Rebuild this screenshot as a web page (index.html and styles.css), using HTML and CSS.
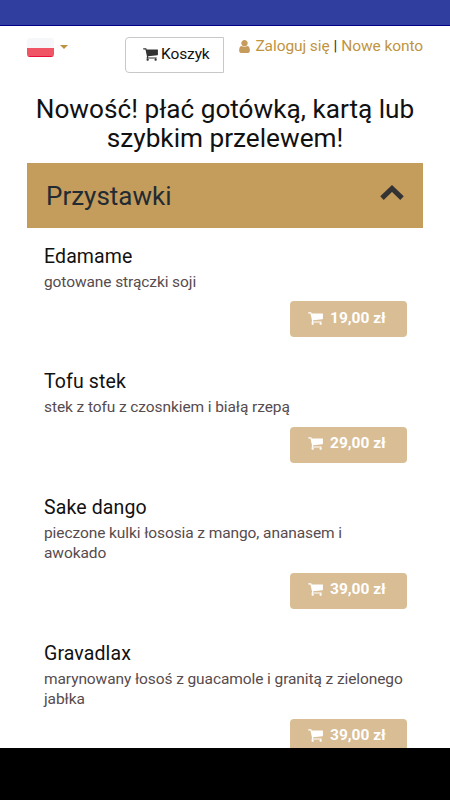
FILE: index.html
```html
<!DOCTYPE html>
<html lang="pl">
<head>
<meta charset="utf-8">
<title>Menu</title>
<link rel="stylesheet" href="styles.css">
</head>
<body>
<svg class="defs" aria-hidden="true">
  <symbol id="cart" viewBox="0 0 1664 1792"><path d="M640 1536q0 52-38 90t-90 38-90-38-38-90 38-90 90-38 90 38 38 90zm896 0q0 52-38 90t-90 38-90-38-38-90 38-90 90-38 90 38 38 90zm128-1088v512q0 24-16.500 42.500t-40.500 21.500l-1044 122q13 60 13 70 0 16-24 64h920q26 0 45 19t19 45-19 45-45 19h-1024q-26 0-45-19t-19-45q0-11 8-31.500t16-36 21.500-40 15.500-29.500l-177-823h-204q-26 0-45-19t-19-45 19-45 45-19h256q16 0 28.500 6.500t19.500 15.500 13 24.500 8 26 5.500 29.500 4.500 26h1201q26 0 45 19t19 45z"/></symbol>
</svg>
<div class="screen">
  <div class="statusbar"></div>
  <header class="top">
    <div class="lang"><span class="flag"></span><span class="caret"></span></div>
    <div class="basket"><svg class="basket-icon"><use href="#cart"/></svg><span>Koszyk</span></div>
    <nav class="account"><svg class="user" viewBox="0 0 1280 1792"><path d="M1280 1399q0 109-62.500 187t-150.500 78h-854q-88 0-150.500-78t-62.500-187q0-85 8.500-160.500t31.500-152 58.500-131 94-89 134.500-34.500q131 128 313 128t313-128q76 0 134.500 34.500t94 89 58.500 131 31.500 152 8.500 160.500zm-256-887q0 159-112.500 271.500t-271.500 112.500-271.500-112.500-112.500-271.500 112.500-271.500 271.500-112.500 271.500 112.500 112.500 271.500z"/></svg><span class="link">Zaloguj się</span> <span class="sep">|</span> <span class="link">Nowe konto</span></nav>
  </header>
  <h1 class="notice">Nowość! płać gotówką, kartą lub<br>szybkim przelewem!</h1>
  <section class="category">
    <h2>Przystawki</h2>
    <svg class="chevron" viewBox="0 0 24 16"><path d="M2 13.100L12 3.500L22 13.100"/></svg>
  </section>
  <main class="menu">
    <article class="dish">
      <h3>Edamame</h3>
      <p>gotowane strączki soji</p>
      <div class="price"><svg class="price-icon"><use href="#cart"/></svg><span>19,00 zł</span></div>
    </article>
    <article class="dish">
      <h3>Tofu stek</h3>
      <p>stek z tofu z czosnkiem i białą rzepą</p>
      <div class="price"><svg class="price-icon"><use href="#cart"/></svg><span>29,00 zł</span></div>
    </article>
    <article class="dish">
      <h3>Sake dango</h3>
      <p>pieczone kulki łososia z mango, ananasem i<br>awokado</p>
      <div class="price"><svg class="price-icon"><use href="#cart"/></svg><span>39,00 zł</span></div>
    </article>
    <article class="dish">
      <h3>Gravadlax</h3>
      <p>marynowany łosoś z guacamole i granitą z zielonego<br>jabłka</p>
      <div class="price"><svg class="price-icon"><use href="#cart"/></svg><span>39,00 zł</span></div>
    </article>
  </main>
</div>
<div class="navbar"></div>
</body>
</html>
```
FILE: styles.css
```css
* { box-sizing: border-box; }
body { margin: 0; width: 450px; height: 800px; overflow: hidden; background: #fff; font-family: Roboto, sans-serif; color: #111; }
svg { display: block; fill: currentColor; flex: none; }
.defs { display: none; }
h1, h2, h3, p { margin: 0; font-weight: 400; white-space: nowrap; }
.screen { height: 748px; overflow: hidden; }
.navbar { height: 52px; background: #000; }
.statusbar { height: 26px; background: #303f9f; border-bottom: 1px solid #00008b; }
.top { display: flex; align-items: flex-start; height: 69px; padding: 11px 27px 0 27.400px; }
.lang { display: flex; width: 97.600px; padding-top: 1px; }
.flag { width: 27px; height: 19px; border-radius: 3px; background: linear-gradient(#f5f7f9 0 10px, #ef5565 10px 18px, #e80f39 18px); }
.caret { margin: 7px 0 0 6px; height: 0; border: 4px solid transparent; border-top-color: #bf913f; border-bottom: 0; }
.basket { display: flex; align-items: center; width: 99px; height: 36px; padding: 0 0 2px 17px; border: 1px solid #c8c8c8; border-radius: 4px 0 0 4px; font-size: 15.500px; letter-spacing: -.1px; line-height: 20px; gap: 3px; }
.basket-icon { width: 15px; height: 16px; color: #333; }
.account { display: flex; margin-left: auto; align-items: center; font-size: 15.500px; letter-spacing: -.09px; line-height: 18px; gap: 4px; white-space: nowrap; }
.user { width: 11px; height: 15px; margin-right: 1px; color: #c69c5d; }
.link { color: #c0953f; }
.sep { color: #333; }
.notice { height: 68px; font-size: 26.200px; line-height: 28.500px; text-align: center; }
.category { display: flex; justify-content: space-between; align-items: center; height: 65.400px; margin: 0 27px 0 27.400px; padding: 0 19px 0 18.600px; background: #c49c5c; color: #222b33; }
.category h2 { font-size: 26px; line-height: 30px; }
.chevron { width: 24px; height: 16px; margin-top: -6px; fill: none; stroke: #333; stroke-width: 5; }
.menu { padding: 17.200px 43px 0 44px; }
.dish { display: flex; flex-direction: column; margin-bottom: 34px; }
.dish h3 { font-size: 19.500px; line-height: 21px; letter-spacing: .12px; }
.dish p { margin-top: 5px; font-size: 15.500px; letter-spacing: -.09px; line-height: 20.500px; color: #574b4d; }
.price { display: flex; align-items: center; align-self: flex-end; width: 117px; height: 36px; margin-top: 9px; padding: 0 0 3px 18px; gap: 7px; border-radius: 4px; background: #d8bd95; color: #fff; font-size: 15.500px; font-weight: 700; }
.price-icon { width: 15px; height: 16px; }
```
